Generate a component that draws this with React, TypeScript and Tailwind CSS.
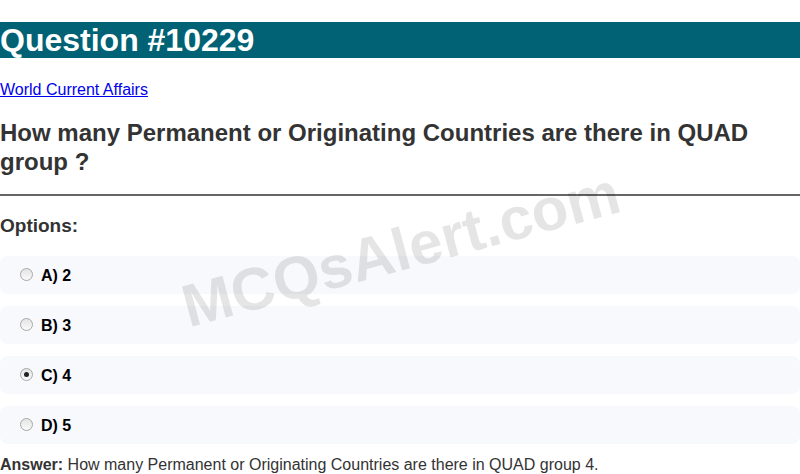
import { useState } from "react";

const options = [
  { id: "a", label: "A) 2" },
  { id: "b", label: "B) 3" },
  { id: "c", label: "C) 4" },
  { id: "d", label: "D) 5" },
];

export default function App() {
  const [picked, setPicked] = useState("c");

  return (
    <div className="relative min-h-screen overflow-hidden bg-white font-['Liberation_Sans',Arial,sans-serif] text-[#333]">
      <div className="h-[22px]" />
      <h1 className="h-[36px] bg-[#016275] text-[32px] font-bold leading-[36px] text-white">
        Question #10229
      </h1>

      <div className="mt-[21px] h-[22px] text-[16px] leading-[22px]">
        <a href="#" className="text-[#0000ee] underline">
          World Current Affairs
        </a>
      </div>

      <h2 className="mt-[17px] text-[24px] font-bold leading-[29px] text-[#333]">
        How many Permanent or Originating Countries are there in QUAD group ?
      </h2>

      <hr className="mt-[18px] border-t-2 border-[#666]" />

      <h3 className="mt-[18px] text-[19px] font-bold leading-[24px] text-[#333]">Options:</h3>

      <div className="mt-[18px] flex flex-col gap-[12px]">
        {options.map((o) => (
          <label
            key={o.id}
            className="flex h-[38px] items-center gap-[8px] rounded-[8px] bg-[#f8f9fc] pl-[20px] text-[16px] font-bold text-black"
          >
            <span className="relative -mt-[1px] flex h-[13px] w-[13px] items-center justify-center rounded-full border border-[#a8a8a8] bg-gradient-to-b from-[#e4e4e4] to-[#fafafa]">
              <input
                type="radio"
                name="opt"
                checked={picked === o.id}
                onChange={() => setPicked(o.id)}
                className="absolute inset-0 m-0 cursor-pointer appearance-none opacity-0"
              />
              {picked === o.id && <span className="h-[5px] w-[5px] rounded-full bg-[#222]" />}
            </span>
            <span className="mt-[2px]">{o.label}</span>
          </label>
        ))}
      </div>

      <p className="mt-[11px] text-[16px] leading-[20px] text-[#333]">
        <b>Answer:</b> How many Permanent or Originating Countries are there in QUAD group 4.
      </p>

      <div className="pointer-events-none absolute left-[401px] top-[250px] -translate-x-1/2 -translate-y-1/2 -rotate-[15deg] select-none whitespace-nowrap text-[60px] font-bold text-black/10">
        MCQsAlert.com
      </div>
    </div>
  );
}
